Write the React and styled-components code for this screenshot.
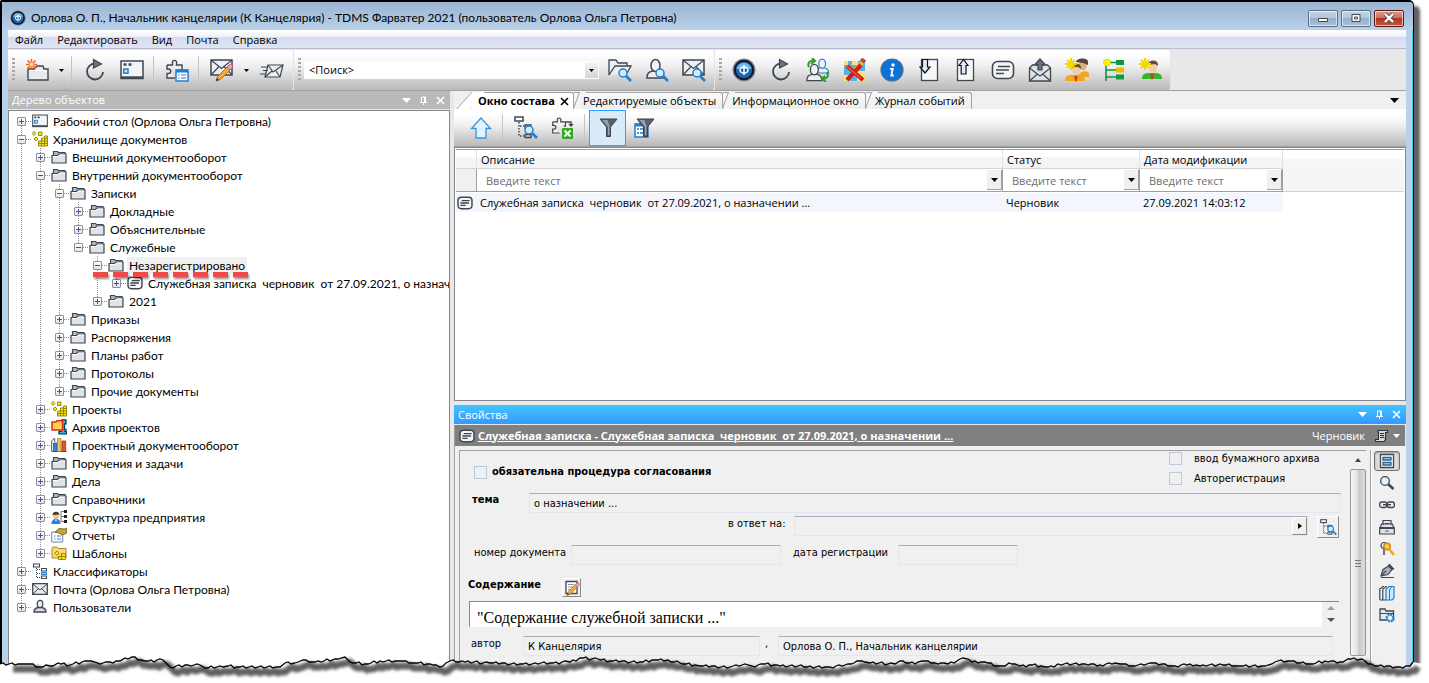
import React from "react";
import styled, { createGlobalStyle, css } from "styled-components";

const ui = '"Open Sans", "Noto Sans", sans-serif';
const wide = 'Lato, "Open Sans", sans-serif';
const form = '"DejaVu Sans Condensed", "DejaVu Sans", sans-serif';
const ink = "#3f4750";
const blue = "#1f7fd0";

const Global = createGlobalStyle`
  * { box-sizing: border-box; }
  body { margin: 0; background: #fff; color: #000; font: 11px/18px ${ui}; }
  button, input, select, textarea { font: inherit; color: inherit; margin: 0; padding: 0; border: 0; border-radius: 0; }
  button { background: none; display: flex; align-items: center; justify-content: center; flex: none; }
  svg { display: block; flex: none; }
`;

/* ---------- window ---------- */
const Page = styled.div`
  position: relative;
  min-height: 100vh;
  display: flex;
  padding: 0 15px 13px 0;
  overflow: hidden;
`;
const Window = styled.main`
  flex: 1;
  min-width: 0;
  display: flex;
  flex-direction: column;
  border: 1px solid #000;
  border-width: 2px 1px 0 2px;
  border-radius: 2px 5px 0 0;
  background: #bad2ea;
  box-shadow: inset -1px 0 #3fd0ee, 6px 6px 3px #606060;
`;
const TitleBar = styled.header`
  display: flex;
  align-items: center;
  height: 28px;
  padding: 4px 9px 0 8px;
  gap: 5px;
  background: linear-gradient(#9ab3d0, #b9d1ea);
  border-radius: 4px 4px 0 0;
`;
const Title = styled.h1`
  flex: 1;
  margin: 0;
  font: 400 12px/18px ${wide};
  white-space: nowrap;
`;
const Caption = styled.button`
  && {
    width: 30px;
    height: 17px;
    border: 1px solid #5d6f87;
    border-radius: 2px;
    box-shadow: inset 0 0 0 1px rgba(255, 255, 255, 0.6);
    background: ${(p) =>
      p.$close
        ? "linear-gradient(#dc9a8c, #cf6f5c 48%, #b3351b 50%, #c8553c)"
        : "linear-gradient(#c3d3e6, #b2c6dd 48%, #98afca 50%, #a9c0da)"};
    border-color: ${(p) => (p.$close ? "#5a1d1a" : "#5d6f87")};
  }
`;
const Captions = styled.div`
  display: flex;
  gap: 3px;
`;
const Client = styled.div`
  flex: 1;
  display: flex;
  flex-direction: column;
  margin: 0 7px 0 6px;
  background: #e8e8e8;
`;
const Menu = styled.nav`
  display: flex;
  height: 19px;
  padding-left: 7px;
  gap: 14px;
  background: linear-gradient(#fff, #f0f2f8 36%, #d5daee 38%, #e0e5f5);
  border-bottom: 1px solid #b6bccc;
  button { line-height: 18px; padding-top: 2px; }
`;

/* ---------- toolbars ---------- */
const ToolRow = styled.div`
  display: flex;
  padding-top: 1px;
  border-bottom: 1px solid #a0a0a0;
`;
const Segment = styled.div`
  display: flex;
  align-items: center;
  height: 40px;
  padding-right: ${(p) => p.$end || 0}px;
  background: linear-gradient(#fff 10%, #f0f0f0 40%, #b9b9b9);
  border-right: 1px solid #e4e4e4;
  border-radius: 0 3px 3px 0;
`;
const Grip = styled.span`
  width: 3px;
  height: 24px;
  margin: 0 3px 0 4px;
  background: repeating-linear-gradient(#a8a8a8 0 2px, transparent 2px 4px);
`;
const Tool = styled.button`
  && {
    width: 37px;
    height: 36px;
    ${(p) =>
      p.$active &&
      css`
        background: #d9eafb;
        border: 1px solid #3399ff;
      `}
  }
`;
const Drop = styled.button`
  && { width: 13px; height: 36px; }
`;
const Sep = styled.span`
  width: 1px;
  height: 28px;
  margin: 0 4px 0 3px;
  background: #c4c4c4;
`;
const Search = styled.label`
  display: flex;
  width: 295px;
  height: 18px;
  margin-right: 2px;
  background: #fff;
  align-items: center;
  input { flex: 1; min-width: 0; height: 18px; background: none; padding-left: 5px; outline: 0; }
  button { width: 13px; height: 16px; margin-right: 1px; background: linear-gradient(#f4f4f4, #d4d4d4); }
`;

/* ---------- panels ---------- */
const Body = styled.div`
  flex: 1;
  display: flex;
  gap: 4px;
  min-height: 0;
`;
const TreePanel = styled.aside`
  width: 442px;
  flex: none;
  display: flex;
  flex-direction: column;
`;
const PanelHead = styled.div`
  display: flex;
  align-items: center;
  height: ${(p) => (p.$active ? 19 : 18)}px;
  padding: 0 1px 0 4px;
  color: #fff;
  background: ${(p) => (p.$active ? "linear-gradient(#42c4ff, #3399ff)" : "#b9b9b9")};
  h2 { flex: 1; margin: 0; font-size: 11px; font-weight: 400; }
  button { width: 17px; height: 16px; }
`;
const Tree = styled.ul`
  flex: 1;
  margin: 1px 0 0;
  padding: 1px 0 40px 3px;
  list-style: none;
  background: #fff;
  border: 1px solid #828790;
  overflow: hidden;
  font: 12px/18px ${wide};
`;
const Node = styled.li`
  position: relative;
  display: flex;
  align-items: center;
  height: 18px;
  white-space: pre;
`;
const Guide = styled.span`
  width: 19px;
  height: 18px;
  flex: none;
  background: ${(p) =>
    p.$on ? "repeating-linear-gradient(#909090 0 1px, transparent 1px 2px) 9px 0 / 1px 18px no-repeat" : "none"};
`;
const Joint = styled.span`
  width: 20px;
  height: 18px;
  flex: none;
  display: flex;
  align-items: center;
  padding-left: 5px;
  background:
    repeating-linear-gradient(90deg, #909090 0 1px, transparent 1px 2px) 14px 9px / 5px 1px no-repeat,
    repeating-linear-gradient(#909090 0 1px, transparent 1px 2px) 9px ${(p) => (p.$first ? "10px" : "0")} / 1px
      ${(p) => (p.$last ? "10px" : "18px")} no-repeat;
`;
const Expander = styled.button`
  && {
    width: 9px;
    height: 9px;
    border: 1px solid #919191;
    border-radius: 1px;
    background:
      linear-gradient(#3a55a8, #3a55a8) 1px 3px / 5px 1px no-repeat,
      ${(p) => (p.$open ? "" : "linear-gradient(#3a55a8, #3a55a8) 3px 1px / 1px 5px no-repeat,")}
      linear-gradient(#fff, #e4e4e4);
  }
`;
const NodeText = styled.span`
  margin-left: 3px;
  padding: 0 2px;
  line-height: 17px;
  background: ${(p) => (p.$selected ? "#f0f0f0" : "none")};
`;
const Marker = styled.span`
  position: absolute;
  left: 81px;
  bottom: -3px;
  width: 155px;
  height: 5px;
  background: repeating-linear-gradient(90deg, #ee4a4a 0 15px, transparent 15px 20px);
  filter: drop-shadow(1px 2px 1px rgba(0, 0, 0, 0.45));
  z-index: 1;
`;

const Work = styled.div`
  flex: 1;
  min-width: 0;
  display: flex;
  flex-direction: column;
`;
const Tabs = styled.div`
  display: flex;
  height: 18px;
  padding: 1px 7px 0 4px;
  background: #f0f0f0;
`;
const Tab = styled.button`
  && {
    position: relative;
    height: 17px;
    padding: 0 6px 0 9px;
    border-top: 1px solid #a0a0a0;
    border-right: 1px solid #a0a0a0;
    border-radius: 0 3px 0 0;
    background: linear-gradient(#fafafa, #ededed);
    white-space: nowrap;
    gap: 5px;
    ${(p) => p.$active && "background: #fff; font-weight: 700; margin-left: 14px; padding: 0 4px 0 6px;"}
  }
  &::before {
    content: "";
    position: absolute;
    left: ${(p) => (p.$active ? "-8px" : "2px")};
    top: -1px;
    width: ${(p) => (p.$active ? 12 : 6)}px;
    height: 17px;
    border-left: 1px solid #a0a0a0;
    background: ${(p) => (p.$active ? "#fff" : "#f4f4f4")};
    transform: skewX(${(p) => (p.$active ? "-42deg" : "-20deg")});
  }
  span { position: relative; }
`;
const Spacer = styled.span`
  flex: 1;
`;
const GridTools = styled.div`
  display: flex;
  align-items: center;
  height: 38px;
  padding-left: 8px;
  background: linear-gradient(#fff 15%, #efefef 45%, #b9b9b9);
  border-bottom: 1px solid #a0a0a0;
`;
const GridBox = styled.div`
  flex: 1;
  min-height: 254px;
  padding: 1px;
  background: #fff;
  border: 1px solid #828790;
`;
const Grid = styled.table`
  width: 100%;
  table-layout: fixed;
  border-collapse: separate;
  border-spacing: 0;
  border-top: 1px solid #a0a0a0;
  th, td { padding: 0; text-align: left; font-weight: 400; white-space: pre; }
  thead tr:first-child th { height: 19px; padding: 2px 0 0 4px; line-height: 16px; border-right: 1px solid #e2e2e2; border-bottom: 1px solid #d5d5d5; background: linear-gradient(#fff 40%, #f5f6f8 42%, #f2f3f5); }
  thead tr:first-child th:last-child { border-right: 0; background: linear-gradient(#fff 45%, #f5f6f8 47%); border-bottom: 0; }
  thead tr:last-child td { height: 23px; border-right: 1px solid #a0a0a0; border-bottom: 1px solid #a0a0a0; }
  thead tr:last-child td:first-child { background: #f0f0f0; }
  thead tr:last-child td:last-child { background: #f4f5f7; border-right: 0; border-bottom-color: #d5d5d5; }
  tbody td { height: 20px; padding-left: 3px; background: #f3f6fc; border-top: 1px solid #fff; }
  tbody td:first-child { padding-left: 1px; }
  tbody td:last-child { background: #fff; }
`;
const Filter = styled.div`
  display: flex;
  align-items: center;
  height: 22px;
  input { flex: 1; min-width: 0; height: 20px; padding-left: 9px; outline: 0; background: none; }
  input::placeholder { color: #6d6d6d; opacity: 1; }
  button { width: 15px; height: 20px; background: #f0f0f0; border-right: 1px solid #a0a0a0; border-bottom: 1px solid #a0a0a0; }
`;

/* ---------- properties ---------- */
const Props = styled.section`
  flex: none;
  display: flex;
  flex-direction: column;
  margin-top: 4px;
`;
const Crumb = styled.div`
  display: flex;
  align-items: center;
  height: 21px;
  margin: 1px 1px 0 0;
  padding: 0 1px 0 4px;
  color: #fff;
  background: #808080;
  border-left: 1px solid #a0a0a0;
  a { flex: 1; margin-left: 3px; color: #fff; font-weight: 700; white-space: pre; }
  span { margin-right: 9px; }
  button { width: 15px; height: 18px; }
`;
const PropsBody = styled.div`
  display: flex;
  padding: 4px 3px 0 4px;
  background: #f0f0f0;
  border-left: 1px solid #a0a0a0;
`;
const Form = styled.form`
  flex: 1;
  min-width: 0;
  height: 220px;
  display: flex;
  font: 11px/14px ${form};
  border: 1px solid #a0a0a0;
  border-width: 1px 0 0 1px;
  label { white-space: nowrap; }
`;
const Fields = styled.div`
  flex: 1;
  min-width: 0;
  padding-right: 9px;
`;
const Row = styled.div`
  display: flex;
  align-items: flex-start;
  height: ${(p) => p.$h}px;
  padding: 0 ${(p) => p.$end || 0}px 0 ${(p) => p.$start}px;
`;
const Strong = styled.label`
  font-weight: 700;
  width: ${(p) => (p.$w ? p.$w + "px" : "auto")};
`;
const Label = styled.label`
  flex: none;
  width: ${(p) => (p.$w ? p.$w + "px" : "auto")};
  padding: 1px 0 0 ${(p) => p.$indent || 0}px;
`;
const Field = styled.input`
  && {
    height: 20px;
    padding: 1px 5px 0 4px;
    flex: ${(p) => (p.$w ? "none" : "1")};
    width: ${(p) => (p.$w ? p.$w + "px" : "auto")};
    min-width: 0;
    background: #f0f0f0;
    border: 1px solid #e3e5f0;
    border-top: 1px solid #abadb3;
    outline: 0;
  }
`;
const Check = styled.input`
  && {
    appearance: none;
    flex: none;
    width: 13px;
    height: 13px;
    border: 1px solid #b9cbdf;
    background: #f0f0f0;
  }
`;
const CheckLine = styled.div`
  display: flex;
  flex: 1;
  gap: 5px;
  align-items: center;
  padding-top: 14px;
`;
const Checks = styled.div`
  display: grid;
  grid-template: 15px 15px / 25px auto;
  align-items: center;
  row-gap: 5px;
  width: 172px;
`;
const Square = styled.button`
  && {
    width: ${(p) => p.$s}px;
    height: ${(p) => p.$s}px;
    background: #f0f0f0;
    border: 1px solid #fff;
    border-right-color: #8a8a8a;
    border-bottom-color: #8a8a8a;
  }
`;
const Lookup = styled.div`
  flex: 1;
  display: flex;
  border: 1px solid #e3e5f0;
  border-top-color: #abadb3;
  height: 20px;
  margin: 0 9px 0 8px;
  input { flex: 1; min-width: 0; background: none; outline: 0; }
  button { width: 15px; height: 18px; border: 1px solid #fff; border-right-color: #8a8a8a; border-bottom-color: #8a8a8a; }
`;
const Memo = styled.div`
  display: flex;
  height: 26px;
  flex: 1;
  background: #fff;
  border: 1px solid #8a8a8a;
  border-width: 1px 0 0 1px;
  textarea { flex: 1; height: 25px; resize: none; outline: 0; background: none; padding: 6px 0 0 7px; overflow: hidden; font: 16px/20px "Liberation Serif", serif; }
`;
const Spin = styled.div`
  width: 17px;
  background: #f0f0f0;
  button { width: 17px; height: 12px; }
`;
const Scroll = styled.div`
  width: 16px;
  display: flex;
  flex-direction: column;
  button { width: 16px; height: 18px; }
`;
const Thumb = styled.div`
  height: 187px;
  display: flex;
  align-items: center;
  justify-content: center;
  border: 1px solid #989898;
  border-radius: 2px;
  background: linear-gradient(90deg, #f5f5f5, #e4e4e4 45%, #c9c9cb 55%, #dcdcdc);
`;
const Side = styled.div`
  width: 33px;
  margin-left: 4px;
  border-left: 1px solid #a0a0a0;
  box-shadow: inset 1px 0 #fff;
  display: flex;
  flex-direction: column;
  align-items: center;
  gap: 2px;
  padding-top: 1px;
  button { width: 26px; height: 20px; border-radius: 3px; }
  button:first-child { border: 1px solid #707070; background: #dcdcdc; box-shadow: inset 0 1px 2px #999; }
`;
const Torn = styled.svg`
  position: absolute;
  left: 0;
  bottom: 0;
  width: 100%;
  height: 33px;
`;

/* ---------- glyphs ---------- */
const Svg = ({ s = 24, children, v }) => (
  <svg width={s} height={s} viewBox={v || `0 0 ${s} ${s}`} fill="none" stroke={ink} strokeWidth="1.5" aria-hidden="true">
    {children}
  </svg>
);
const Down = ({ c = "#000", w = 5 }) => (
  <svg width={w} height={Math.ceil(w / 2)} viewBox="0 0 10 5" preserveAspectRatio="none" aria-hidden="true">
    <path d="M0 0h10L5 5z" fill={c} />
  </svg>
);
const Pin = () => (
  <Svg s={9}><path d="M2.500 6V1h4v5M5.500 1v5M1 6.500h7M4.500 6v3" stroke="#fff" strokeWidth="1" /></Svg>
);
const Cross = ({ c = "#fff", s = 9 }) => (
  <Svg s={s} v="0 0 9 9"><path d="M1 1l7 7M8 1l-7 7" stroke={c} strokeWidth="1.600" /></Svg>
);
const Lens = ({ x = 0, y = 0 }) => (
  <g transform={`translate(${x} ${y})`}>
    <path d="M8 8l5 5" stroke={blue} strokeWidth="2.600" />
    <circle cx="5" cy="5" r="4" fill="#d4ecfb" stroke={blue} strokeWidth="1.500" />
  </g>
);
const Envelope = () => (
  <>
    <rect x="1" y="5" width="21" height="15" fill="#eceef0" />
    <path d="M1 5l10.500 8.500L22 5M1 20l8-8.500M22 20l-8-8.500" strokeWidth="1.200" />
  </>
);
const Puzzle = () => (
  <path d="M2 7h5.500V5.500a2.200 2.200 0 1 1 4 0V7H17v5h-2M2 7v4h1.500a2 2 0 1 1 0 4.500H2V20h8" fill="#eceef0" strokeWidth="1.400" />
);
const NewFolder = () => (
  <Svg>
    <path d="M3 22V11h6l3-3h6l1 3h4v11z" fill="#e8eaed" strokeWidth="1.400" />
    <path d="M4 12.500h18" stroke="#fff" strokeWidth="1" />
    <path d="M6.500 1v11M1 6.500h11M2.500 2.500l8 8M10.500 2.500l-8 8" stroke="#ef5a28" strokeWidth="1.500" />
    <circle cx="6.500" cy="6.500" r="2.400" fill="#ffe27a" stroke="#f08a2c" strokeWidth="1" />
  </Svg>
);
const Refresh = () => (
  <Svg>
    <path d="M12 5.500a8 8 0 1 0 8 8.500" strokeWidth="1.800" />
    <path d="M10.500 1.500l8 4.500-8 4z" fill="#6b747e" strokeWidth="1.200" />
  </Svg>
);
const Desk = ({ s = 24 }) => (
  <Svg s={s} v="0 0 24 24">
    <rect x="1" y="3" width="22" height="17.500" fill="#f4f5f6" strokeWidth="1.500" />
    <path d="M1 19.500h22" strokeWidth="2.400" />
    <path d="M3.500 6.500h3M8.500 6.500h3" strokeWidth="2.600" />
    <rect x="3.800" y="11" width="4.200" height="4.200" stroke={blue} fill="#cfe8fb" />
  </Svg>
);
const PuzzleList = () => (
  <Svg>
    <Puzzle />
    <rect x="11" y="12" width="12" height="11" fill="#fff" stroke={blue} />
    <path d="M11 13h12" stroke={blue} strokeWidth="3" />
    <path d="M13 17h1.500M16 17h5M13 20h1.500M16 20h5" stroke={blue} strokeWidth="1.200" />
  </Svg>
);
const Pencil = ({ x = 0, y = 0 }) => (
  <g transform={`translate(${x} ${y})`}>
    <path d="M0 15l1.500-4.500L11 1l3 3-9.500 9.500z" fill="#f7a838" stroke="#8a5a1c" strokeWidth=".8" />
    <path d="M11 1l3 3 2-2a2 2 0 0 0-3-3z" fill="#f0a0ae" stroke="#b5606c" strokeWidth=".8" />
    <path d="M0 15l1-3 2 2z" fill="#333" stroke="none" />
  </g>
);
const MailEdit = () => (<Svg><g transform="translate(0 -3)"><Envelope /></g><Pencil x={6} y={8} /></Svg>);
const MailSend = () => (
  <Svg>
    <path d="M8 7h15l-3 12H5z" fill="#eceef0" strokeWidth="1.200" />
    <path d="M8 7l5 7L23 7M5 19l7-6M20 19l-4-6M1 9h7M3 12.500h5M0 16h6" strokeWidth="1.200" />
  </Svg>
);
const FolderFind = () => (
  <Svg>
    <path d="M1 17V2h7l2 3h9v3" fill="#eceef0" strokeWidth="1.300" />
    <path d="M1 17L7 8h16l-4 7" fill="#eceef0" strokeWidth="1.300" />
    <Lens x={10} y={10} />
  </Svg>
);
const Person = ({ c = ink }) => (
  <>
    <path d="M1 20c0-5 2-6 5.500-7h6c3.500 1 5.500 2 5.500 7z" fill="#eceef0" stroke={c} />
    <ellipse cx="9.500" cy="7.500" rx="4.500" ry="6" fill="#f2f3f4" stroke={c} />
  </>
);
const UserFind = () => (<Svg><g transform="translate(1 0)"><Person /></g><Lens x={10} y={10} /></Svg>);
const MailFind = () => (<Svg><g transform="translate(0 -3)"><Envelope /></g><Lens x={10} y={10} /></Svg>);
const Logo = ({ s = 24 }) => (
  <Svg s={s} v="0 0 24 24">
    <circle cx="12" cy="12" r="11" fill="#151c2c" stroke="#8d98a6" strokeWidth="1.200" />
    <circle cx="12" cy="12" r="8" fill="#1b68b8" stroke="none" />
    <path d="M4.500 11a7.600 7.600 0 0 1 15 0z" fill="#6db7ec" stroke="none" />
    <ellipse cx="12" cy="12" rx="4" ry="3" stroke="#fff" strokeWidth="1.400" />
    <path d="M12 7v10" stroke="#fff" strokeWidth="1.500" />
  </Svg>
);
const Users = () => (
  <Svg>
    <g transform="translate(9 0) scale(.75)"><Person c={blue} /></g>
    <g transform="translate(0 5) scale(.88)"><Person /></g>
    <path d="M3 9c-2-4 1-7 5-6M6 0l3 3-4 3M21 14c2 4 0 7-4 7M19 18l-3 3 4 3" stroke="#2c9a28" strokeWidth="2" />
  </Svg>
);
const MapDelete = () => (
  <Svg>
    <rect x="1" y="3" width="21" height="20" fill="#4fb4e6" stroke="none" />
    <path d="M1 17h6v6H1zM14 13h8v10h-8zM9 3h6v4H9zM1 3h4v4H1z" fill="#ffe07a" stroke="none" />
    <path d="M3 22L9 13l10-12 4 2-9 11z" fill="#e8b04a" stroke="none" />
    <path d="M4 8l16 14M18 7L4 22" stroke="#d11f14" strokeWidth="4.200" />
    <path d="M3.500 8l14 12" stroke="#f0584a" strokeWidth="1.200" />
    <path d="M18 1l4 3" stroke="#a8514a" strokeWidth="3.600" />
  </Svg>
);
const Info = () => (
  <Svg>
    <circle cx="12" cy="12" r="11" fill="#0c72d8" stroke="#4a6d96" strokeWidth="1.200" />
    <circle cx="13" cy="7" r="1.700" fill="#fff" stroke="none" />
    <path d="M10 10.800h2.700l-1.400 6.700h2.500" stroke="#fff" strokeWidth="1.800" />
  </Svg>
);
const DocIn = ({ up }) => (
  <Svg>
    <rect x={up ? 3.5 : 4.5} y="1.500" width="16" height="21" fill="#f6f7f8" strokeWidth="1.300" />
    {up ? (
      <path d="M9.500 1.500L5 7.500h2.200V16h4.800V7.500h2z" fill="#dceafc" stroke="#111" strokeWidth="1.200" />
    ) : (
      <path d="M5.500 1.500h5v7.500h2.500L8 15 3 9h2.500z" fill="#dceafc" stroke="#111" strokeWidth="1.200" />
    )}
  </Svg>
);
const Note = ({ s = 24 }) => (
  <Svg s={s} v="0 0 24 24">
    <rect x="1.500" y="3.500" width="21" height="17" rx="5" fill="#f4f5f6" strokeWidth={s < 20 ? 2.2 : 1.6} />
    <path d="M7 8.500h12M5 12h13M5 15.500h8" strokeWidth={s < 20 ? 2 : 1.4} />
  </Svg>
);
const MailUp = () => (
  <Svg>
    <path d="M1.500 23V10l3-3h15l3 3v13z" fill="#dfe2e5" strokeWidth="1.300" />
    <path d="M1.500 10l10.500 8 10.500-8M1.500 23l8-7M22.500 23l-8-7" strokeWidth="1.200" />
    <path d="M12 1L7 6.500h3V12h4V6.500h3z" fill="#6b747e" strokeWidth="1.200" />
  </Svg>
);
const Sun = () => (
  <path d="M6 0v12M0 6h12M2 2l8 8M10 2l-8 8" stroke="#f4d600" strokeWidth="2.200" />
);
const Staff = ({ c, two }) => (
  <Svg>
    {two && (
      <>
        <ellipse cx="18" cy="7" rx="4" ry="5.500" fill="#dcb27c" stroke="none" />
        <path d="M11 4c0-4 12-5 12 0v3l-5-2z" fill="#5b4434" stroke="none" />
        <path d="M13 19c0-6 11-8 11-3v3z" fill={c} stroke="none" />
      </>
    )}
    <ellipse cx="14" cy="10" rx="4" ry="5" fill="#efd0a0" stroke="none" transform={two ? "translate(-3 2)" : ""} />
    <path d="M9 7c0-6 11-6 10 1l-3-2z" fill="#6a5038" stroke="none" transform={two ? "translate(-3 3)" : ""} />
    <path d="M3 21c0-6 4-6 10-6s10 0 10 6z" fill={c} stroke="none" transform={two ? "translate(-3 2)" : ""} />
    <path d="M12 16l1 5 1-5" stroke="#c83a2a" strokeWidth="1.500" transform={two ? "translate(-2 2)" : ""} />
    <Sun />
  </Svg>
);
const Scheme = () => (
  <Svg>
    <path d="M4 5v18M4 4.500h10M4 12h10M4 19h10" stroke="#0c9a3e" strokeWidth="1.600" />
    <path d="M14 2h8v5h-8zM14 16.500h8v5h-8z" fill="#0c9a3e" stroke="none" />
    <path d="M14 9.500h8v5h-8z" fill="#f2b800" stroke="none" />
    <circle cx="5" cy="4.500" r="3.500" fill="#fff100" stroke="#d8cc00" strokeWidth=".6" />
  </Svg>
);
const UpArrow = () => (
  <Svg><path d="M12 2L2.500 12.500H7V22h10v-9.500h4.500z" fill="#e3f3fd" stroke="#3a95dc" strokeWidth="1.300" /></Svg>
);
const TreeFind = ({ s = 24 }) => (
  <Svg s={s} v="0 0 24 24">
    <rect x="1" y="1" width="8" height="4" fill="#fff" />
    <path d="M5 6v15M6 10h4M6 20h4" strokeDasharray="1.500 1.500" />
    <path d="M11 9h6v3h-6zM11 18.500h6v3h-6z" strokeWidth="1.400" />
    <Lens x={10} y={9} />
  </Svg>
);
const PuzzleX = () => (
  <Svg>
    <g transform="scale(.85)"><Puzzle /></g>
    <path d="M15 6h5v4M18 8l2 2 2-2" strokeWidth="1.300" />
    <rect x="11" y="12" width="11" height="11" rx="1" fill="#35a827" stroke="none" />
    <path d="M13.500 14.500l6 6M19.500 14.500l-6 6" stroke="#fff" strokeWidth="1.800" />
  </Svg>
);
const Funnel = ({ table }) => (
  <Svg>
    {table && (
      <>
        <rect x="2" y="8" width="13" height="13" fill="#fff" stroke={blue} />
        <path d="M2 9h13" stroke={blue} strokeWidth="3" />
        <path d="M4 13h2M7 13h6M4 17h2M7 17h6" stroke={blue} />
      </>
    )}
    <path d="M4 3h17l-6.500 8v9.500h-4V11z" fill="#596068" stroke="#3a4149" strokeWidth="1" />
    <path d="M6.500 4h5l2 6v9h-1.500v-8z" fill="#9aa1a8" stroke="none" />
  </Svg>
);
const Folder = () => (
  <Svg s={16}>
    <path d="M2.500 6V2.500h4l1 1H14V6" fill="#aeb5bd" strokeWidth="1.200" />
    <path d="M1 14V6.500h5.500L8 5h7v9z" fill="#dfe2e6" strokeWidth="1.200" />
    <path d="M2 7.500h5L8.500 6H14" stroke="#fff" strokeWidth="1" />
  </Svg>
);
const Blocks = () => (
  <Svg s={16}>
    <path d="M6.500 15v-5h3V7h3V5h3v10zM6.500 12.500h9M9.500 10v5M12.500 7v8M9.500 10h6M12.500 7.500h3" fill="#f6e616" stroke="#8c8000" strokeWidth=".9" />
    <path d="M2 .500l2 2-2 2-2-2zM4 6l2 2-2 2-2-2zM6.500 1h3.500v3.500H6.500z" fill="#f6e616" stroke="#8c8000" strokeWidth=".9" />
  </Svg>
);
const Archive = () => (
  <Svg s={16}>
    <path d="M10 .800h5v4h-1.500v5.500H15l-1 2h1.500v2.500H8v-2.500h3" fill="#35b6d8" stroke="#0e3b5a" strokeWidth="1.300" />
    <path d="M1 11V3h4l1-1.300h5.500V11z" fill="#ffd24a" stroke="#e02a1a" strokeWidth="1.500" />
  </Svg>
);
const Books = () => (
  <Svg s={16}>
    <path d="M.7 14.500V4l2-2.500h1V5M15.500 14.500H.7" stroke="#555" strokeWidth="1" />
    <path d="M2.500 6H6v8.500H2.500z" fill="#3b7fd4" stroke="#1d4b8c" strokeWidth=".7" />
    <path d="M6.500 1.500h3.500v13H6.500z" fill="#f2c45a" stroke="#9c7420" strokeWidth=".7" />
    <path d="M11 4h3.700v10.500H11z" fill="#d8583a" stroke="#8c2a18" strokeWidth=".7" />
  </Svg>
);
const Org = () => (
  <Svg s={16}>
    <path d="M10 2.500v10M10 2.500h3M10 7.500h3M10 12.500h3" stroke="#777" strokeWidth="1" />
    <path d="M13 1h3v3h-3zM13 6h3v3h-3zM13 11h3v3h-3z" fill="#222" stroke="none" />
    <circle cx="5" cy="7" r="3" fill="#f0c490" stroke="none" />
    <path d="M1.500 6c0-4.500 7-4.500 7 0L7 5.500z" fill="#4a3420" stroke="none" />
    <path d="M.5 15c0-7 9-7 9 0z" fill="#2c7fd8" stroke="none" />
    <path d="M4 10.500l1 2.500 1-2.500z" fill="#fff" stroke="none" />
  </Svg>
);
const Report = () => (
  <Svg s={16}>
    <path d="M.7 5h11v10H.7z" fill="#fff" stroke="#6e86a8" strokeWidth="1" />
    <path d="M3 9h1.500M6 9h4M3 12h1.500M6 12h4" stroke="#4a7cc0" strokeWidth="1.200" />
    <path d="M4 5l4-3.500 5.500.5L16 1v5l-5 2-3-2z" fill="#c9a030" stroke="#6c5a14" strokeWidth=".8" />
  </Svg>
);
const Templates = () => (
  <Svg s={16}>
    <path d="M1 13V3.500l1-1.500h4l1 1.500h8V13z" fill="#fbd978" stroke="#b08420" strokeWidth="1" />
    <path d="M7.500 14.500v-3h3V8.500h4v6zM7.500 11.500h7M10.500 8.500v6M6 6l2.200 2.200L6 10.400 3.800 8.200z" fill="#f6e616" stroke="#8c8000" strokeWidth=".9" />
  </Svg>
);
const Classes = () => (
  <Svg s={16}>
    <path d="M1.500 1h6v3h-6zM9.500 5.500h5v2.500h-5zM9.500 13h5v2.500h-5z" fill="#fff" strokeWidth="1.100" />
    <path d="M9.500 9.500h5v2h-5z" stroke={blue} fill="#9fd2f7" strokeWidth="1" />
    <path d="M4.500 5v9.500M5 6.500h4M5 10.500h4M5 14.500h4" strokeDasharray="1 1" strokeWidth="1" />
  </Svg>
);
const Mail = () => (
  <Svg s={16}>
    <path d="M.7 2.700h14.600v10.600H.7z" fill="#e8eaec" strokeWidth="1.300" />
    <path d="M1 3l7 6 7-6M1 13l5.500-5.500M15 13L9.500 7.500" strokeWidth="1" />
  </Svg>
);
const User = () => (
  <Svg s={16}>
    <path d="M2 13c0-3.500 2-4 4-4.500h4c2 .5 4 1 4 4.500z" fill="#d9dcdf" strokeWidth="1.300" />
    <ellipse cx="8" cy="5" rx="2.800" ry="3.600" fill="#e8eaec" strokeWidth="1.200" />
  </Svg>
);
const NoteSmall = () => <Note s={16} />;
const DeskSmall = () => <Desk s={16} />;
const EditNote = () => (
  <Svg s={16}>
    <path d="M2 1.500h11v12H2z" fill="#fff" strokeWidth="1.300" />
    <path d="M4 4.500h6M4 7h5M4 9.500h3" stroke="#98a" strokeWidth="1" />
    <g transform="translate(3 4) scale(.75)"><Pencil /></g>
  </Svg>
);
const Scroller = () => (
  <Svg s={14}>
    <path d="M2.500 1.500h10v2h-2v7h1M2.500 1.500l1 2v7h-3v2h8.500l1.500-2" fill="#d8dadd" stroke="#2c3238" strokeWidth="1.100" />
    <path d="M5 4.500h4M5 6.500h4M5 8.500h4" stroke="#2c3238" strokeWidth="1" />
  </Svg>
);
const side = [
  ["Атрибуты", <g><path d="M1.500 1.500h13v13h-13z" fill="#fff" strokeWidth="1.300" /><path d="M4 4.500h8v2.500H4zM4 9.500h8V12H4z" stroke="#2c5f8e" fill="#bcdcf5" strokeWidth="1.300" /></g>],
  ["Поиск", <g><path d="M9 9l5.500 5" strokeWidth="2.600" /><circle cx="6" cy="6" r="4.300" fill="#e3f0f8" strokeWidth="1.300" /></g>],
  ["Связи", <g><rect x=".7" y="5" width="7" height="5.500" rx="2" strokeWidth="1.300" /><rect x="8.300" y="5" width="7" height="5.500" rx="2" strokeWidth="1.300" /><path d="M4 7.700h8" /></g>],
  ["Файлы", <g><path d="M.7 15V8.500h14.600V15zM1.500 8l1-3h11l1 3M4 6V1.500h8V6" fill="#dfe2e6" strokeWidth="1.200" /><path d="M1 9.500h14M6 4.500h4M6.500 12h3" strokeWidth="1" /></g>],
  ["Права", <g><circle cx="5" cy="4.500" r="3" strokeWidth="1.200" /><path d="M5 7v7" /><circle cx="8" cy="5.500" r="3.200" fill="#ffc94d" stroke="#c98a14" /><path d="M10 8l5 6" stroke="#f0a820" strokeWidth="2.600" /></g>],
  ["Подпись", <g><path d="M2 13l2-6.500L9.500 3l3.500 3.500L9 11.500z" fill="#a9b1b8" strokeWidth="1.200" /><path d="M9.500 1.500l5 5" strokeWidth="2.400" /><path d="M2 13l5-5M2 14.500h13" strokeWidth="1.200" /></g>],
  ["Версии", <g><path d="M.8 15V4L4 1.500h1M3.800 15V4L7 1.500h1M.8 15h3M3.800 15h3" strokeWidth="1.200" /><path d="M7 15V4l3-2.500h5V13l-2 2z" fill="#cfe8fb" stroke={blue} strokeWidth="1.200" /><path d="M10.500 15V5l2-3" stroke={blue} strokeWidth="1" /></g>],
  ["Настройки", <g><path d="M1 13V2h5l1 2h7.500v9z" fill="#e8eaed" strokeWidth="1.300" /><path d="M1 6.500h13" strokeWidth="1" /><circle cx="11" cy="11" r="3.200" stroke={blue} strokeWidth="2.600" strokeDasharray="1.700 .8" fill="#fff" /></g>],
];

/* ---------- data ---------- */
const nodes = [
  [0, DeskSmall, "Рабочий стол (Орлова Ольга Петровна)"],
  [0, Blocks, "Хранилище документов", 1],
  [1, Folder, "Внешний документооборот"],
  [1, Folder, "Внутренний документооборот", 1],
  [2, Folder, "Записки", 1],
  [3, Folder, "Докладные"],
  [3, Folder, "Объяснительные"],
  [3, Folder, "Служебные", 1],
  [4, Folder, "Незарегистрировано", 1, 1],
  [5, NoteSmall, "Служебная записка  черновик  от 27.09.2021, о назначении ..."],
  [4, Folder, "2021"],
  [2, Folder, "Приказы"],
  [2, Folder, "Распоряжения"],
  [2, Folder, "Планы работ"],
  [2, Folder, "Протоколы"],
  [2, Folder, "Прочие документы"],
  [1, Blocks, "Проекты"],
  [1, Archive, "Архив проектов"],
  [1, Books, "Проектный документооборот"],
  [1, Folder, "Поручения и задачи"],
  [1, Folder, "Дела"],
  [1, Folder, "Справочники"],
  [1, Org, "Структура предприятия"],
  [1, Report, "Отчеты"],
  [1, Templates, "Шаблоны"],
  [0, Classes, "Классификаторы"],
  [0, Mail, "Почта (Орлова Ольга Петровна)"],
  [0, User, "Пользователи"],
];
const hasNext = (i, level) => {
  for (let j = i + 1; j < nodes.length; j++) {
    if (nodes[j][0] < level) return false;
    if (nodes[j][0] === level) return true;
  }
  return false;
};

const mainTools = [
  ["Обозреватель", Logo], ["Обновить", Refresh], ["Сменить пользователя", Users], ["Удалить", MapDelete],
  ["Информация", Info], ["Входящий", () => <DocIn />], ["Исходящий", () => <DocIn up />], ["Записка", Note],
  ["Отправить", MailUp], ["Группа", () => <Staff c="#f9a51a" two />], ["Схема", Scheme],
  ["Сотрудник", () => <Staff c="#35b52c" />],
];

const edge = [
  [0, 664], [22, 664], [30, 664], [40, 667], [50, 666], [58, 663], [70, 665], [85, 661], [95, 662], [100, 664], [110, 662],
  [120, 661], [125, 658], [132, 657], [145, 661], [163, 660], [170, 667], [188, 665], [200, 665], [205, 668], [228, 666],
  [240, 667], [280, 667], [285, 663], [295, 663], [303, 660], [315, 662], [335, 659], [345, 657], [350, 662], [365, 664],
  [380, 661], [400, 661], [415, 663], [430, 664], [440, 667], [450, 661], [465, 662], [490, 663], [520, 664], [550, 663],
  [570, 662], [580, 658], [598, 659], [610, 661], [640, 662], [655, 660], [668, 660], [680, 663], [700, 666], [730, 667],
  [745, 664], [752, 666], [765, 664], [780, 666], [830, 667], [848, 664], [862, 661], [870, 663], [895, 664], [900, 661],
  [915, 664], [922, 661], [935, 663], [948, 664], [957, 661], [960, 659], [968, 659], [972, 662], [985, 662], [997, 666],
  [1005, 666], [1009, 663], [1020, 666], [1032, 665], [1045, 667], [1054, 667], [1058, 664], [1085, 664], [1100, 665],
  [1115, 663], [1120, 664], [1135, 666], [1150, 663], [1175, 666], [1190, 664], [1200, 666], [1220, 664], [1240, 666],
  [1262, 666], [1272, 664], [1278, 661], [1288, 661], [1310, 664], [1325, 661], [1340, 662], [1348, 659], [1362, 659],
  [1368, 664], [1375, 666], [1400, 667], [1410, 666], [1413, 662],
];
const tear = (() => {
  const out = [];
  edge.forEach(([x, y], i) => {
    out.push(`${x} ${y - 650}`);
    const next = edge[i + 1];
    if (!next) return;
    for (let px = x + 3, k = 0; px < next[0] - 2; px += 3, k++) {
      const t = (px - x) / (next[0] - x);
      const jitter = ((px * 7 + k * 5) % 3) - 1;
      out.push(`${px} ${Math.round(y + (next[1] - y) * t - 650 + jitter)}`);
    }
  });
  return out.join(" L");
})();

const heads = ["Описание", "Статус", "Дата модификации"];

export default function App() {
  return (
    <>
      <Global />
      <Page>
        <Window>
          <TitleBar>
            <Logo s={16} />
            <Title>Орлова О. П., Начальник канцелярии (К Канцелярия) - TDMS Фарватер 2021 (пользователь Орлова Ольга Петровна)</Title>
            <Captions>
              <Caption aria-label="Свернуть"><Svg s={12}><path d="M1.500 6.500h9v3h-9z" fill="#fff" strokeWidth="1" /></Svg></Caption>
              <Caption aria-label="Развернуть"><Svg s={12}><path d="M2 2.500h8v7H2z" fill="#fff" strokeWidth="1" /><path d="M4.500 5h3v2h-3z" strokeWidth="1" /></Svg></Caption>
              <Caption $close aria-label="Закрыть"><Svg s={12}><path d="M2 2l8 8M10 2l-8 8" stroke="#5a4a58" strokeWidth="4" /><path d="M2 2l8 8M10 2l-8 8" stroke="#fff" strokeWidth="2.400" /></Svg></Caption>
            </Captions>
          </TitleBar>
          <Client>
            <Menu>
              {["Файл", "Редактировать", "Вид", "Почта", "Справка"].map((m) => <button key={m}>{m}</button>)}
            </Menu>
            <ToolRow>
              <Segment $end={3}>
                <Grip />
                <Tool aria-label="Создать"><NewFolder /></Tool>
                <Drop aria-label="Создать из списка"><Down /></Drop>
                <Sep />
                <Tool aria-label="Обновить"><Refresh /></Tool>
                <Tool aria-label="Рабочий стол"><Desk /></Tool>
                <Sep />
                <Tool aria-label="Команды"><PuzzleList /></Tool>
                <Sep />
                <Tool aria-label="Новое письмо"><MailEdit /></Tool>
                <Drop aria-label="Виды писем"><Down /></Drop>
                <Tool aria-label="Отправить письмо"><MailSend /></Tool>
              </Segment>
              <Segment $end={2}>
                <Grip />
                <Search>
                  <input aria-label="Поиск" defaultValue="<Поиск>" />
                  <button aria-label="История поиска"><Down /></button>
                </Search>
                <Tool aria-label="Найти объект"><FolderFind /></Tool>
                <Tool aria-label="Найти пользователя"><UserFind /></Tool>
                <Tool aria-label="Найти письмо"><MailFind /></Tool>
              </Segment>
              <Segment $end={1}>
                <Grip />
                {mainTools.map(([name, Icon]) => <Tool key={name} aria-label={name}><Icon /></Tool>)}
              </Segment>
            </ToolRow>
            <Body>
              <TreePanel>
                <PanelHead>
                  <h2>Дерево объектов</h2>
                  <button aria-label="Меню панели"><Down c="#fff" w={9} /></button>
                  <button aria-label="Закрепить"><Pin /></button>
                  <button aria-label="Закрыть панель"><Cross /></button>
                </PanelHead>
                <Tree role="tree">
                  {nodes.map(([level, Icon, text, open, selected], i) => (
                    <Node key={text} role="treeitem" aria-level={level + 1} aria-expanded={!!open} aria-selected={!!selected}>
                      {Array.from({ length: level }, (_, k) => <Guide key={k} $on={hasNext(i, k)} />)}
                      <Joint $first={i === 0} $last={!hasNext(i, level)}>
                        <Expander $open={open} aria-label={open ? "Свернуть ветвь" : "Развернуть ветвь"} />
                      </Joint>
                      <Icon />
                      <NodeText $selected={selected}>{text}</NodeText>
                      {selected && <Marker />}
                    </Node>
                  ))}
                </Tree>
              </TreePanel>
              <Work>
                <Tabs role="tablist">
                  <Tab $active role="tab"><span>Окно состава</span><Cross c="#000" /></Tab>
                  <Tab role="tab"><span>Редактируемые объекты</span></Tab>
                  <Tab role="tab"><span>Информационное окно</span></Tab>
                  <Tab role="tab"><span>Журнал событий</span></Tab>
                  <Spacer />
                  <button aria-label="Список вкладок"><Down w={9} /></button>
                </Tabs>
                <GridTools>
                  <Tool aria-label="Вверх"><UpArrow /></Tool>
                  <Sep />
                  <Tool aria-label="Показать в дереве"><TreeFind /></Tool>
                  <Tool aria-label="Экспорт в Excel"><PuzzleX /></Tool>
                  <Sep />
                  <Tool $active aria-label="Фильтр"><Funnel /></Tool>
                  <Tool aria-label="Настройка фильтра"><Funnel table /></Tool>
                </GridTools>
                <GridBox>
                  <Grid>
                    <colgroup>
                      <col width="21" /><col /><col width="137" /><col width="143" /><col width="121" />
                    </colgroup>
                    <thead>
                      <tr><th />{heads.map((h) => <th key={h}>{h}</th>)}<th /></tr>
                      <tr>
                        <td />
                        {heads.map((h) => (
                          <td key={h}>
                            <Filter>
                              <input aria-label={h} placeholder="Введите текст" />
                              <button aria-label={"Условия: " + h}><Down w={7} /></button>
                            </Filter>
                          </td>
                        ))}
                        <td />
                      </tr>
                    </thead>
                    <tbody>
                      <tr>
                        <td><NoteSmall /></td>
                        <td>Служебная записка  черновик  от 27.09.2021, о назначении ...</td>
                        <td>Черновик</td>
                        <td>27.09.2021 14:03:12</td>
                        <td />
                      </tr>
                    </tbody>
                  </Grid>
                </GridBox>
                <Props>
                  <PanelHead $active>
                    <h2>Свойства</h2>
                    <button aria-label="Меню панели"><Down c="#fff" w={9} /></button>
                    <button aria-label="Закрепить"><Pin /></button>
                    <button aria-label="Закрыть панель"><Cross /></button>
                  </PanelHead>
                  <Crumb>
                    <NoteSmall />
                    <a href="#note">Служебная записка - Служебная записка  черновик  от 27.09.2021, о назначении ...</a>
                    <span>Черновик</span>
                    <button aria-label="Формы"><Scroller /></button>
                    <button aria-label="Выбор формы"><Down c="#fff" w={7} /></button>
                  </Crumb>
                  <PropsBody>
                    <Form onSubmit={(e) => e.preventDefault()}>
                      <Fields>
                        <Row $h={42} $start={14}>
                          <CheckLine>
                            <Check type="checkbox" id="proc" />
                            <Strong htmlFor="proc">обязательна процедура согласования</Strong>
                          </CheckLine>
                          <Checks>
                            <Check type="checkbox" id="paper" /><Label htmlFor="paper">ввод бумажного архива</Label>
                            <Check type="checkbox" id="auto" /><Label htmlFor="auto">Авторегистрация</Label>
                          </Checks>
                        </Row>
                        <Row $h={23} $start={12}>
                          <Strong htmlFor="topic" $w={57}>тема</Strong>
                          <Field id="topic" defaultValue="о назначении ..." />
                        </Row>
                        <Row $h={29} $start={268} $end={2}>
                          <Label htmlFor="reply">в ответ на:</Label>
                          <Lookup>
                            <input id="reply" />
                            <button type="button" aria-label="Выбрать"><Svg s={8}><path d="M2 1v6l4-3z" fill="#000" stroke="none" /></Svg></button>
                          </Lookup>
                          <Square $s={22} type="button" aria-label="Показать в дереве"><TreeFind s={17} /></Square>
                        </Row>
                        <Row $h={33} $start={14}>
                          <Label htmlFor="num" $w={97}>номер документа</Label>
                          <Field id="num" $w={210} />
                          <Label htmlFor="date" $w={117} $indent={12}>дата регистрации</Label>
                          <Field id="date" $w={120} />
                        </Row>
                        <Row $h={23} $start={8}>
                          <Strong htmlFor="memo" $w={94}>Содержание</Strong>
                          <Square $s={19} type="button" aria-label="Редактировать"><EditNote /></Square>
                        </Row>
                        <Row $h={35} $start={9} $end={2}>
                          <Memo>
                            <textarea id="memo" defaultValue={'"Содержание служебной записки ..."'} />
                            <Spin>
                              <button type="button" aria-label="Выше"><Svg s={8}><path d="M0 6h8L4 2z" fill="#a0a0a0" stroke="none" /></Svg></button>
                              <button type="button" aria-label="Ниже"><Svg s={8}><path d="M0 2h8L4 6z" fill="#555" stroke="none" /></Svg></button>
                            </Spin>
                          </Memo>
                        </Row>
                        <Row $h={25} $start={11} $end={8}>
                          <Label htmlFor="author" $w={52}>автор</Label>
                          <Field id="author" $w={237} defaultValue="К Канцелярия" />
                          <Label htmlFor="post" $w={18} $indent={5}>,</Label>
                          <Field id="post" defaultValue="Орлова О. П., Начальник канцелярии" />
                        </Row>
                      </Fields>
                      <Scroll>
                        <button type="button" aria-label="Прокрутить вверх"><Svg s={8}><path d="M1 6h6L4 2z" fill="#444" stroke="none" /></Svg></button>
                        <Thumb><Svg s={8}><path d="M1 1.500h6M1 4.500h6M1 7.500h6" stroke="#777" strokeWidth="1" /></Svg></Thumb>
                      </Scroll>
                    </Form>
                    <Side>
                      {side.map(([name, art]) => <button key={name} aria-label={name}><Svg s={16}>{art}</Svg></button>)}
                    </Side>
                  </PropsBody>
                </Props>
              </Work>
            </Body>
          </Client>
        </Window>
        <Torn viewBox="0 0 1429 33" preserveAspectRatio="none" aria-hidden="true">
          <defs>
            <filter id="soft" x="-5%" y="-50%" width="110%" height="200%"><feGaussianBlur stdDeviation="1.5" /></filter>
          </defs>
          <path d={`M${tear} L1429 15 L1429 33 L0 33 Z`} fill="#fff" />
          <path d={`M8 14 L${tear.slice(tear.indexOf("30 14"))}`} transform="translate(5 5)" fill="none" stroke="#606060" strokeWidth="7" strokeLinejoin="round" filter="url(#soft)" />
          <path d={`M${tear}`} fill="none" stroke="#000" strokeWidth="1.300" />
        </Torn>
      </Page>
    </>
  );
}
